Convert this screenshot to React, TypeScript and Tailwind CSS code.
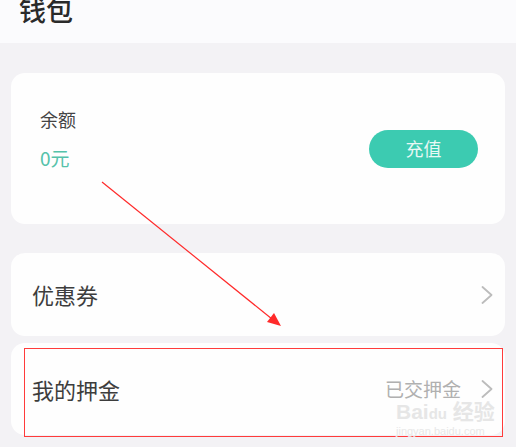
const font = { fontFamily: '"Noto Sans CJK SC", "Noto Sans", sans-serif' };

function Chevron() {
  return (
    <svg width="12" height="18" viewBox="0 0 12 18" fill="none">
      <polyline points="1.5,1 10.5,9 1.5,17" stroke="#bcbcbc" strokeWidth="1.8" strokeLinejoin="round" strokeLinecap="round" />
    </svg>
  );
}

export default function App() {
  return (
    <div className="relative h-[447px] w-[516px] overflow-hidden bg-[#f3f2f5]" style={font}>
      {/* header */}
      <div className="h-[43px] overflow-hidden bg-[#fbfbfd] pl-[19px]">
        <h1 className="-mt-[7px] text-[27px] font-medium leading-[34px] text-[#2a2a2a]">钱包</h1>
      </div>

      <div className="px-[11px] pt-[30px]">
        {/* balance card */}
        <div className="flex h-[151px] items-center justify-between rounded-[14px] bg-[#fefefe] pl-[29px] pr-[27px]">
          <div className="mb-[20px] flex flex-col">
            <span className="text-[18px] leading-[24px] text-[#444]">余额</span>
            <span className="mt-[15px] text-[19px] leading-[24px] text-[#55c2aa]">0元</span>
          </div>
          <button className="flex h-[38px] w-[109px] items-center justify-center rounded-full bg-[#3ccbb1] text-[18px] text-[#e8f8f4]">
            充值
          </button>
        </div>

        {/* coupons */}
        <div className="mt-[29px] flex h-[83px] items-center justify-between rounded-[14px] bg-[#fefefe] pl-[21px] pr-[12px]">
          <span className="text-[22px] text-[#3d3d3d]">优惠券</span>
          <Chevron />
        </div>

        {/* deposit */}
        <div className="mt-[7px] flex h-[92px] items-center justify-between rounded-[14px] bg-[#fefefe] pl-[21px] pr-[12px]">
          <span className="text-[22px] text-[#3d3d3d]">我的押金</span>
          <div className="flex items-center gap-[20px]">
            <span className="text-[19px] text-[#b0b0b0]">已交押金</span>
            <Chevron />
          </div>
        </div>
      </div>

      {/* annotation: red box */}
      <div className="pointer-events-none absolute left-[24px] top-[348px] h-[89px] w-[479px] border border-[#ff3b3b]" />

      {/* watermark */}
      <div className="pointer-events-none absolute left-[396px] top-[401px] flex flex-col items-start leading-none">
        <span className="text-[21px] font-bold text-[#e6e6e6]" style={{ fontFamily: '"Liberation Sans", "Noto Sans CJK SC", sans-serif' }}>
          Bai<span className="text-[15px]">du</span> 经验
        </span>
        <span className="mt-[4px] text-[11px] text-[#e8e8e8]" style={{ fontFamily: '"Liberation Sans", sans-serif' }}>
          jingyan.baidu.com
        </span>
      </div>

      {/* annotation: arrow */}
      <svg className="pointer-events-none absolute left-0 top-0" width="516" height="447">
        <line x1="102" y1="182" x2="272" y2="319" stroke="#ff2a2a" strokeWidth="1.2" />
        <polygon points="281,326 267,322 274,313" fill="#ff2a2a" />
      </svg>
    </div>
  );
}
